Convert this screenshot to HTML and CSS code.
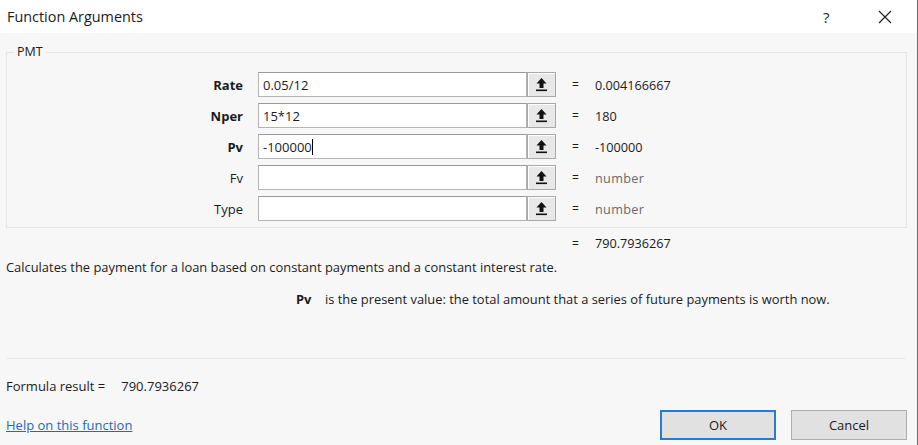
FILE: index.html
```html
<!DOCTYPE html>
<html>
<head>
<meta charset="utf-8">
<title>Function Arguments</title>
<link rel="stylesheet" href="styles.css">
</head>
<body>
<div class="window">
  <div class="titlebar">
    <span class="title">Function Arguments</span>
    <span class="help">?</span>
    <span class="close"><svg width="14" height="14" viewBox="0 0 14 14"><path d="M1 1L13 13M13 1L1 13" stroke="#222" stroke-width="1.2" fill="none"/></svg></span>
  </div>
  <div class="content">
    <fieldset class="group">
      <legend>PMT</legend>
      <div class="row">
        <span class="label req">Rate</span>
        <span class="input">0.05/12</span>
        <span class="pick"><svg width="13" height="15" viewBox="0 0 13 15"><path d="M6.5 1L1.5 6.5H4.5V11H8.5V6.5H11.5Z" fill="#111"/><rect x="1" y="12.5" width="11" height="1.6" fill="#111"/></svg></span>
        <span class="eq">=</span>
        <span class="val">0.004166667</span>
      </div>
      <div class="row">
        <span class="label req">Nper</span>
        <span class="input">15*12</span>
        <span class="pick"><svg width="13" height="15" viewBox="0 0 13 15"><path d="M6.5 1L1.5 6.5H4.5V11H8.5V6.5H11.5Z" fill="#111"/><rect x="1" y="12.5" width="11" height="1.6" fill="#111"/></svg></span>
        <span class="eq">=</span>
        <span class="val">180</span>
      </div>
      <div class="row">
        <span class="label req">Pv</span>
        <span class="input">-100000<span class="caret"></span></span>
        <span class="pick"><svg width="13" height="15" viewBox="0 0 13 15"><path d="M6.5 1L1.5 6.5H4.5V11H8.5V6.5H11.5Z" fill="#111"/><rect x="1" y="12.5" width="11" height="1.6" fill="#111"/></svg></span>
        <span class="eq">=</span>
        <span class="val">-100000</span>
      </div>
      <div class="row">
        <span class="label">Fv</span>
        <span class="input"></span>
        <span class="pick"><svg width="13" height="15" viewBox="0 0 13 15"><path d="M6.5 1L1.5 6.5H4.5V11H8.5V6.5H11.5Z" fill="#111"/><rect x="1" y="12.5" width="11" height="1.6" fill="#111"/></svg></span>
        <span class="eq">=</span>
        <span class="val hint">number</span>
      </div>
      <div class="row">
        <span class="label">Type</span>
        <span class="input"></span>
        <span class="pick"><svg width="13" height="15" viewBox="0 0 13 15"><path d="M6.5 1L1.5 6.5H4.5V11H8.5V6.5H11.5Z" fill="#111"/><rect x="1" y="12.5" width="11" height="1.6" fill="#111"/></svg></span>
        <span class="eq">=</span>
        <span class="val hint">number</span>
      </div>
    </fieldset>
    <div class="result">
      <span class="eq">=</span>
      <span class="val">790.7936267</span>
    </div>
    <p class="desc">Calculates the payment for a loan based on constant payments and a constant interest rate.</p>
    <div class="argdesc">
      <span class="argname">Pv</span>
      <span class="argtext">is the present value: the total amount that a series of future payments is worth now.</span>
    </div>
    <div class="sep"></div>
    <div class="formula">
      <span>Formula result =</span>
      <span class="fval">790.7936267</span>
    </div>
    <div class="footer">
      <a class="link" href="#">Help on this function</a>
      <div class="buttons">
        <button class="btn ok">OK</button>
        <button class="btn">Cancel</button>
      </div>
    </div>
  </div>
</div>
</body>
</html>
```

FILE: styles.css
```css
* { box-sizing: border-box; }
html, body { margin: 0; padding: 0; }
body {
  width: 918px;
  height: 445px;
  overflow: hidden;
  font-family: "Open Sans", "Noto Sans", sans-serif;
  font-size: 12px;
  color: #1b1b1b;
  background: #f7f7f7;
}
.window {
  width: 918px;
  height: 445px;
  border-right: 1px solid #6e6e6e;
  display: flex;
  flex-direction: column;
}
.titlebar {
  height: 33px;
  background: #ffffff;
  display: flex;
  align-items: center;
  padding-left: 7px;
}
.title {
  font-size: 14.4px;
  color: #1a1a1a;
  flex: 1;
}
.help {
  font-size: 15px;
  width: 12px;
  margin-right: 43px;
  color: #222;
}
.close {
  display: flex;
  margin-right: 25px;
}
.content {
  flex: 1;
  padding-top: 11px;
  display: flex;
  flex-direction: column;
}
.group {
  margin: 0 10px 0 6px;
  padding: 12px 0 6px 0;
  border: 1px solid #e6e6e6;
  min-width: 0;
}
.group legend {
  margin-left: 7px;
  padding: 0 3px;
  font-size: 12.5px;
  line-height: 16px;
}
.row {
  display: flex;
  align-items: center;
  height: 25px;
  margin-bottom: 6px;
}
.row:last-child { margin-bottom: 0; }
.label {
  width: 236px;
  text-align: right;
  margin-right: 15px;
  font-size: 13px;
}
.label.req { font-weight: 700; }
.input {
  width: 269px;
  height: 25px;
  background: #fff;
  border: 1px solid #b4b4b4;
  border-top-color: #9a9a9a;
  display: flex;
  align-items: center;
  padding-left: 4px;
  font-size: 13px;
}
.caret {
  display: inline-block;
  width: 1px;
  height: 16px;
  background: #000;
}
.pick {
  width: 29px;
  height: 25px;
  background: #e8e8e8;
  border: 1px solid #a8a8a8;
  box-shadow: inset 1px 1px 0 #fff;
  display: flex;
  align-items: center;
  justify-content: center;
}
.eq {
  margin-left: 16px;
  width: 23px;
  font-size: 12px;
}
.val { font-size: 12.7px; }
.val.hint { color: #6a6a6a; letter-spacing: 0.3px; }
.result {
  display: flex;
  align-items: center;
  height: 16px;
  margin-top: 7px;
  padding-left: 556px;
}
.desc {
  margin: 8px 0 0 6px;
  font-size: 12.9px;
  line-height: 16px;
}
.argdesc {
  margin: 16px 0 0 296px;
  display: flex;
  font-size: 12.9px;
  line-height: 16px;
}
.argname { font-weight: 700; width: 29px; }
.sep {
  margin: 51px 11px 0 6px;
  height: 1px;
  background: #e8e8e8;
}
.formula {
  margin: 19px 0 0 6px;
  display: flex;
  font-size: 13px;
  line-height: 16px;
}
.fval { margin-left: 16px; }
.footer {
  margin-top: 16px;
  display: flex;
  align-items: flex-end;
  justify-content: space-between;
  padding-left: 6px;
  padding-right: 10px;
}
.link {
  color: #2b67b0;
  font-size: 13px;
  line-height: 17px;
  text-decoration: underline;
  margin-bottom: 6px;
}
.buttons {
  display: flex;
  gap: 15px;
}
.btn {
  width: 116px;
  height: 30px;
  background: #e1e1e1;
  border: 1px solid #adadad;
  font-family: inherit;
  font-size: 13px;
  color: #1b1b1b;
  padding: 0;
}
.btn.ok { border: 2px solid #2a7ad3; }
```
